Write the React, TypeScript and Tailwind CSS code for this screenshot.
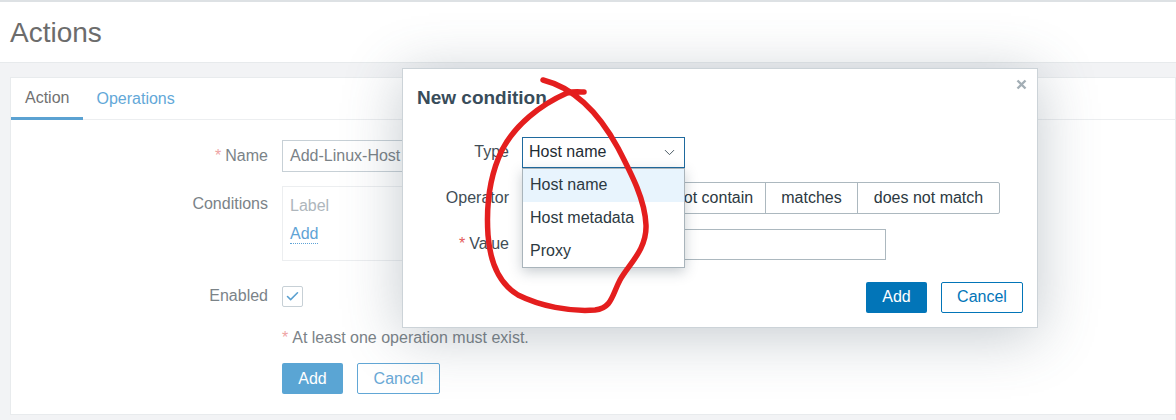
import { Check, ChevronDown } from "lucide-react";

export default function App() {
    const fields = [
        { label: "contains", width: "w-[100px]" },
        { label: "does not contain", width: "w-[142px]" },
        { label: "matches", width: "w-[92px]" },
        { label: "does not match", width: "w-[142px]" },
    ];

    return (
        <div className="relative w-[1176px] h-[420px] overflow-hidden bg-[#f2f3f5] font-['Liberation_Sans',Arial,sans-serif] text-[16px]">
            {/* Header */}
            <div className="h-[63px] bg-white border-t-2 border-[#dde1e4] border-b border-b-[#e7eaec] flex items-center px-[10px]">
                <h1 className="text-[28px] text-[#6c6c6c] leading-none mt-[2px]">Actions</h1>
            </div>

            {/* Page card */}
            <div className="ml-[10px] mt-[14px] h-[338px] bg-white border border-[#e8ebed]">
                <div className="flex h-[42px] border-b border-[#eceef0]">
                    <div className="px-[14px] flex items-center text-[#717171] border-b-[3px] border-[#5ba2d2] mb-[-1px]">Action</div>
                    <div className="px-[13px] flex items-center text-[#63a8d8]">Operations</div>
                </div>

                <div className="pt-[20px] flex flex-col">
                    <div className="flex items-center h-[32px]">
                        <div className="w-[271px] text-right text-[#7b8388] pr-[14px]"><span className="text-[#eea3a3] mr-1">*</span>Name</div>
                        <div className="w-[450px] h-[32px] border border-[#c7d0d6] px-[7px] flex items-center text-[#7a8287]">Add-Linux-Host</div>
                    </div>

                    <div className="flex mt-[14px]">
                        <div className="w-[271px] text-right text-[#7b8388] pr-[14px] pt-[6px]">Conditions</div>
                        <div className="w-[500px] h-[75px] border border-[#eceef0] px-[7px] pt-[7px] flex flex-col gap-[7px]">
                            <span className="text-[#aeb6bc]">Label</span>
                            <span className="text-[#5fa3d6] self-start border-b border-dotted border-[#5fa3d6] leading-[18px]">Add</span>
                        </div>
                    </div>

                    <div className="flex items-center mt-[23px]">
                        <div className="w-[271px] text-right text-[#7b8388] pr-[14px]">Enabled</div>
                        <div className="w-[21px] h-[21px] border border-[#c7d0d6] rounded-[2px] flex items-center justify-center">
                            <Check className="w-[15px] h-[15px] text-[#5aa0d0]" strokeWidth={2.5} />
                        </div>
                    </div>

                    <div className="ml-[271px] mt-[18px] text-[#7b8388]"><span className="text-[#eea3a3] mr-1">*</span>At least one operation must exist.</div>

                    <div className="ml-[271px] mt-[13px] flex gap-[14px]">
                        <button className="w-[61px] h-[31px] bg-[#5aa5d4] text-white rounded-[2px]">Add</button>
                        <button className="w-[83px] h-[31px] border border-[#62a7d6] text-[#6aa9d6] rounded-[2px]">Cancel</button>
                    </div>
                </div>
            </div>

            {/* Modal */}
            <div className="absolute left-[402px] top-[68px] w-[636px] h-[260px] bg-white border border-[#ccd3d8] shadow-[0_8px_55px_rgba(70,90,105,0.32)] px-[14px]">
                <div className="relative pt-[15px]">
                    <h2 className="text-[19px] font-bold text-[#384c5a]">New condition</h2>
                    <svg width="11" height="11" viewBox="0 0 11 11" className="absolute right-[-4px] top-[10px]">
                        <path d="M1.5 1.5 L9.5 9.5 M9.5 1.5 L1.5 9.5" stroke="#a3aeb5" strokeWidth="2.4" />
                    </svg>
                </div>

                <div className="mt-[24px] flex flex-col">
                    <div className="flex items-center h-[31px]">
                        <div className="w-[92px] text-right text-[#414d55]">Type</div>
                        <div className="relative ml-[13px]">
                            <div className="w-[163px] h-[31px] border border-[#1f6a9e] px-[6px] flex items-center justify-between text-[#1f2c33]">
                                Host name
                                <ChevronDown className="w-[17px] h-[17px] text-[#4a5963]" strokeWidth={1.4} />
                            </div>
                            <div className="absolute left-0 top-[31px] w-[163px] z-10 bg-white border border-[#a9b4bb] shadow-[0_4px_12px_rgba(40,60,75,0.25)] text-[#2c3941]">
                                <div className="h-[33px] px-[7px] flex items-center bg-[#e8f4fd]">Host name</div>
                                <div className="h-[33px] px-[7px] flex items-center">Host metadata</div>
                                <div className="h-[32px] px-[7px] flex items-center">Proxy</div>
                            </div>
                        </div>
                    </div>

                    <div className="flex items-center h-[32px] mt-[14px]">
                        <div className="w-[92px] text-right text-[#414d55]">Operator</div>
                        <div className="ml-[13px] flex border border-[#acb8bf] rounded-[2px]">
                            {fields.map((f, i) => (
                                <div key={f.label} className={`${f.width} h-[30px] flex items-center justify-center text-[#2c3941] ${i > 0 ? "border-l border-[#acb8bf]" : ""}`}>
                                    {f.label}
                                </div>
                            ))}
                        </div>
                    </div>

                    <div className="flex items-center h-[31px] mt-[15px]">
                        <div className="w-[92px] text-right text-[#414d55]"><span className="text-[#e45959] mr-1">*</span>Value</div>
                        <div className="ml-[13px] w-[364px] h-[31px] border border-[#acb8bf]"></div>
                    </div>

                    <div className="flex justify-end gap-[14px] mt-[22px]">
                        <button className="w-[61px] h-[31px] bg-[#0275b8] text-white rounded-[2px]">Add</button>
                        <button className="w-[82px] h-[31px] border border-[#0275b8] text-[#0275b8] rounded-[2px]">Cancel</button>
                    </div>
                </div>
            </div>

            {/* Hand-drawn annotation */}
            <svg className="absolute inset-0 pointer-events-none z-20" width="1176" height="420" viewBox="0 0 1176 420">
                <path
                    d="M543,80 C575,88 600,115 618,148 C632,175 645,200 646,225 C647,250 628,265 620,280 C612,295 612,308 595,310 C570,312 540,306 518,295 C498,283 490,262 488,235 C486,205 490,175 502,150 C515,125 540,105 567,93 C574,91 580,92 584,92"
                    fill="none"
                    stroke="#e41e1e"
                    strokeWidth="5.5"
                    strokeLinecap="round"
                    strokeLinejoin="round"
                />
            </svg>
        </div>
    );
}
